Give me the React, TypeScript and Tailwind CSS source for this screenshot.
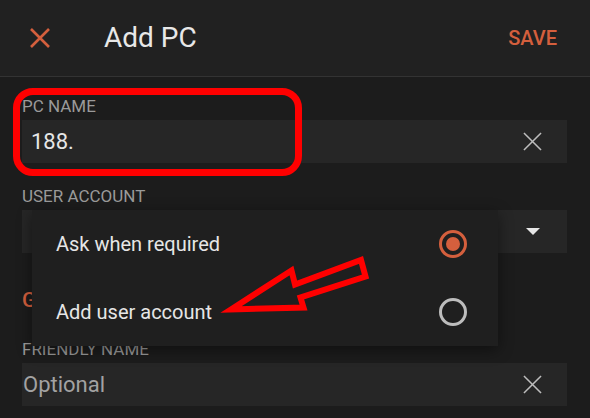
import React from "react";

const orange = "#d45f3d";

const CloseIcon = ({ color, size, stroke }: { color: string; size: number; stroke: number }) => (
  <svg width={size} height={size} viewBox="0 0 20 20" fill="none">
    <path d="M1 1L19 19M19 1L1 19" stroke={color} strokeWidth={stroke} />
  </svg>
);

const Field = ({ label, value, placeholder }: { label: string; value?: string; placeholder?: string }) => (
  <div className="flex flex-col">
    <div className="text-[17px] leading-5 text-[#9a9a9a] h-5">{label}</div>
    <div className="mt-1 h-[43px] bg-[#262626] flex items-center justify-between pr-[25px]">
      {value ? (
        <span className="pl-[9px] text-[22px] text-[#e6e6e6]">{value}</span>
      ) : (
        <span className="pl-[1px] text-[22px] text-[#a2a2a2]">{placeholder}</span>
      )}
      <CloseIcon color="#bdbdbd" size={19} stroke={1.6} />
    </div>
  </div>
);

const Radio = ({ checked }: { checked: boolean }) => (
  <div
    className={`w-[28px] h-[28px] rounded-full border-[3px] flex items-center justify-center ${
      checked ? "border-[#d45f3d]" : "border-[#bdbdbd]"
    }`}
  >
    {checked && <div className="w-[14px] h-[14px] rounded-full bg-[#d45f3d]" />}
  </div>
);

const App = () => {
  return (
    <div
      className="relative w-[590px] h-[418px] overflow-hidden bg-[#1c1c1c]"
      style={{ fontFamily: "Roboto, 'Noto Sans', sans-serif" }}
    >
      {/* top bar */}
      <div className="h-[77px] bg-[#212121] border-b border-[#333333] flex items-center pb-[1px]">
        <div className="pl-[30px] w-[104px]">
          <CloseIcon color={orange} size={20} stroke={2.6} />
        </div>
        <div className="flex-1 text-[28px] text-[#e8e8e8]">Add PC</div>
        <div className="pr-[33px] text-[20px] font-medium text-[#d45f3d] pt-[1px]">SAVE</div>
      </div>

      <div className="px-[22px] pr-[23px] pt-[19px]">
        <Field label="PC NAME" value="188." />
        <div className="mt-[23px]">
          <div className="text-[17px] leading-5 text-[#9a9a9a] h-5">USER ACCOUNT</div>
          <div className="mt-1 h-[43px] bg-[#262626] flex items-center justify-end pr-[27px]">
            <svg width="14" height="8" viewBox="0 0 14 8">
              <path d="M0 0H14L7 7Z" fill="#e6e6e6" />
            </svg>
          </div>
        </div>
        <div className="mt-[35px] h-6 leading-6 text-[21px] font-medium text-[#d45f3d]">GENERAL</div>
        <div className="mt-[27px]">
          <Field label="FRIENDLY NAME" placeholder="Optional" />
        </div>
      </div>

      {/* dropdown menu */}
      <div className="absolute left-[32px] top-[210px] w-[466px] bg-[#1f1f1f] shadow-[0_4px_14px_rgba(0,0,0,0.45)]">
        {[
          { text: "Ask when required", checked: true },
          { text: "Add user account", checked: false },
        ].map((o) => (
          <div key={o.text} className="h-[68px] flex items-center justify-between pl-6 pr-[31px]">
            <span className="text-[20px] text-[#e6e6e6]">{o.text}</span>
            <Radio checked={o.checked} />
          </div>
        ))}
      </div>

      {/* red annotations */}
      <div className="absolute left-[13px] top-[88px] w-[289px] h-[88px] border-[7px] border-[#ff0000] rounded-[20px]" />
      <svg className="absolute left-0 top-0" width="590" height="418">
        <polygon
          points="231,309.5 291.5,270.5 295,284.5 361,260 365.5,276.5 300.5,297.5 303.5,307.5"
          fill="none"
          stroke="#ff0000"
          strokeWidth="6"
          strokeLinejoin="miter"
        />
      </svg>
    </div>
  );
};

export default App;
